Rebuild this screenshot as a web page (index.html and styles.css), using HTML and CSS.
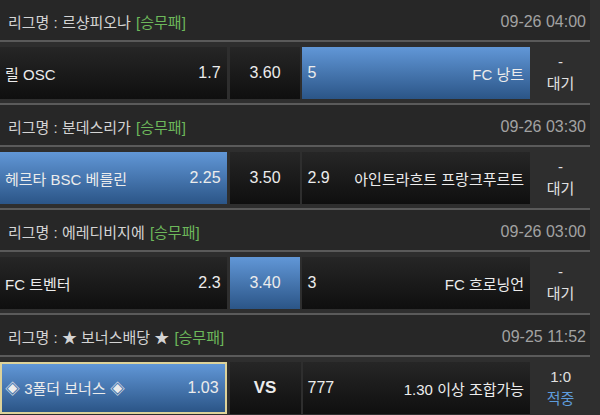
FILE: index.html
```html
<!DOCTYPE html>
<html lang="ko">
<head>
<meta charset="utf-8">
<link rel="stylesheet" href="styles.css">
</head>
<body>
<div class="list">
  <section class="block">
    <div class="head"><span class="league">리그명 : 르샹피오나 <span class="type">[승무패]</span></span><span class="date">09-26 04:00</span></div>
    <div class="row">
      <div class="cell home"><span class="name">릴 OSC</span><span class="odd">1.7</span></div>
      <div class="cell draw"><span class="odd">3.60</span></div>
      <div class="cell away sel"><span class="odd">5</span><span class="name">FC 낭트</span></div>
      <div class="status"><span>-</span><span>대기</span></div>
    </div>
  </section>
  <section class="block">
    <div class="head"><span class="league">리그명 : 분데스리가 <span class="type">[승무패]</span></span><span class="date">09-26 03:30</span></div>
    <div class="row">
      <div class="cell home sel"><span class="name">헤르타 BSC 베를린</span><span class="odd">2.25</span></div>
      <div class="cell draw"><span class="odd">3.50</span></div>
      <div class="cell away"><span class="odd">2.9</span><span class="name">아인트라흐트 프랑크푸르트</span></div>
      <div class="status"><span>-</span><span>대기</span></div>
    </div>
  </section>
  <section class="block">
    <div class="head"><span class="league">리그명 : 에레디비지에 <span class="type">[승무패]</span></span><span class="date">09-26 03:00</span></div>
    <div class="row">
      <div class="cell home"><span class="name">FC 트벤터</span><span class="odd">2.3</span></div>
      <div class="cell draw sel"><span class="odd">3.40</span></div>
      <div class="cell away"><span class="odd">3</span><span class="name">FC 흐로닝언</span></div>
      <div class="status"><span>-</span><span>대기</span></div>
    </div>
  </section>
  <section class="block">
    <div class="head"><span class="league">리그명 : ★ 보너스배당 ★ <span class="type">[승무패]</span></span><span class="date">09-25 11:52</span></div>
    <div class="row">
      <div class="cell home sel bonus"><span class="name">◈ 3폴더 보너스 ◈</span><span class="odd">1.03</span></div>
      <div class="cell draw"><span class="vs">VS</span></div>
      <div class="cell away"><span class="odd">777</span><span class="name">1.30 이상 조합가능</span></div>
      <div class="status"><span>1:0</span><span class="hit">적중</span></div>
    </div>
  </section>
</div>
</body>
</html>
```

FILE: styles.css
```css
html, body {
  margin: 0;
  padding: 0;
  background: #2f2f2f;
  font-family: "Liberation Sans", "Noto Sans CJK KR", sans-serif;
  color: #ececec;
  overflow: hidden;
}

.list {
  width: 590px;
  margin-top: -2px;
}

.block {
  height: 105px;
  display: flex;
  flex-direction: column;
}

.head {
  border-top: 2px solid #5a5a5a;
  border-bottom: 2px solid #5a5a5a;
  background: #272727;
  display: flex;
  align-items: center;
  justify-content: space-between;
  padding: 3px 4px 0 8px;
  height: 37px;
}

.league {
  font-size: 15px;
  color: #d4d4d4;
}

.type {
  color: #6db85b;
  margin-left: 1px;
}

.date {
  font-size: 16px;
  color: #a2a2a2;
}

.row {
  display: flex;
  padding: 5px 0 4px;
  height: 52px;
  background: #2e2e2e;
}

.cell {
  display: flex;
  align-items: center;
  justify-content: space-between;
  background: linear-gradient(#262626, #0f0f0f);
  font-size: 16px;
  box-sizing: border-box;
}

.cell .name {
  font-size: 15px;
}

.home {
  width: 227px;
  padding: 0 6px 0 5px;
  margin-right: 3px;
}

.draw {
  width: 71px;
  justify-content: center;
  margin-right: 2px;
}

.away {
  width: 228px;
  padding: 0 6px 0 5px;
}

.sel {
  background: linear-gradient(#6197d7, #2b5587);
}

.bonus {
  border: 2px solid #ddd29a;
  padding: 0 6px 0 3px;
}

.vs {
  font-weight: bold;
  font-size: 17px;
}

.status {
  width: 59px;
  display: flex;
  flex-direction: column;
  align-items: center;
  justify-content: center;
  font-size: 15px;
  line-height: 22px;
  color: #e0e0e0;
  padding-left: 1px;
}

.hit {
  color: #5e9cdc;
}
```
